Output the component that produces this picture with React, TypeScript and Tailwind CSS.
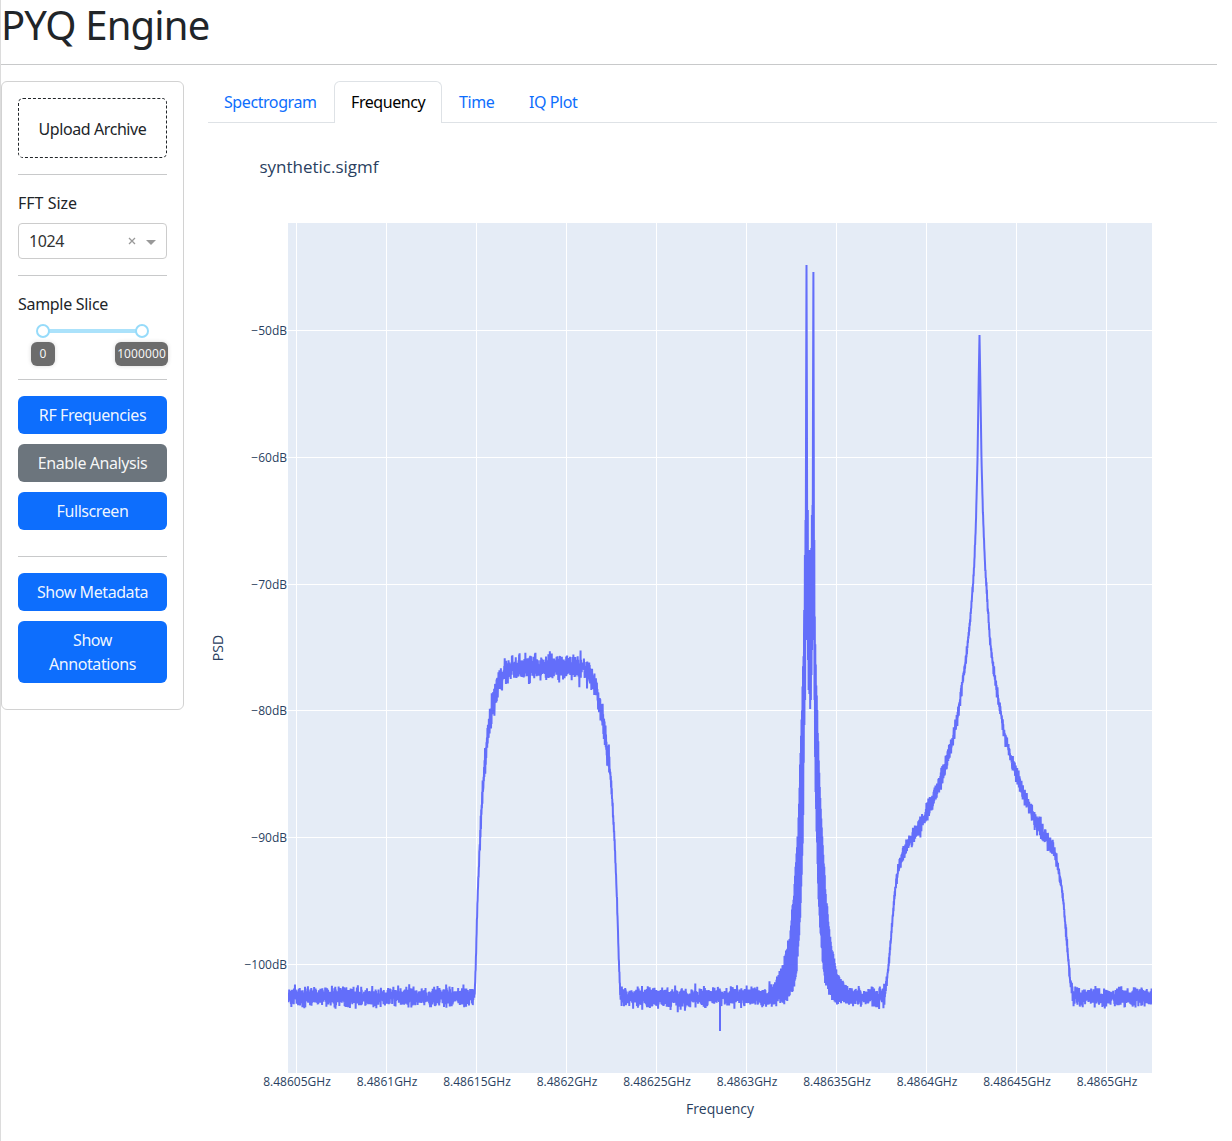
import React from "react";

type Point = [number, number];

function createRandom(seed: number) {
  let state = seed;
  return () => {
    state = (state * 1664525 + 1013904223) >>> 0;
    return state / 4294967296;
  };
}

const random = createRandom(20240);

function gauss() {
  let sum = 0;
  for (let i = 0; i < 6; i++) sum += random();
  return (sum - 3) * 1.41;
}

function interpolate(points: Point[], x: number) {
  if (x <= points[0][0]) return points[0][1];
  for (let i = 1; i < points.length; i++) {
    if (x <= points[i][0]) {
      const [x0, y0] = points[i - 1];
      const [x1, y1] = points[i];
      return y0 + ((y1 - y0) * (x - x0)) / (x1 - x0);
    }
  }
  return points[points.length - 1][1];
}

// [x, y, noise deviation]
const CENTRE: [number, number, number][] = [
  [288, 997, 3.3], [474, 997, 3.3], [474.8, 992, 1.5], [476, 958, 1.5], [477.5, 900, 2], [479.5, 850, 3],
  [482, 800, 4], [485, 765, 4.5], [488, 734, 5], [492, 711, 5], [496, 693, 5], [500, 681, 4.6], [505, 671, 4.2],
  [512, 667.5, 4.2], [582, 667.5, 4.2], [588, 671, 4.2], [593, 680, 4.2], [597, 691, 4.5], [601, 710, 5],
  [605, 735, 5], [609, 764, 4.5], [612, 795, 3], [614.5, 840, 2], [617, 900, 1.5], [619, 965, 1.5],
  [620.3, 995, 2.5], [621, 997, 3.3], [768, 997, 3.3],
];

const LEFT_TOP: Point[] = [
  [768, 991], [775, 985], [780, 974], [784, 963], [787, 950], [790, 935], [792, 915], [794, 890],
  [796, 860], [798, 833], [799, 803], [800, 765], [801, 735], [802, 710], [803, 670], [804, 640],
];
const LEFT_BOTTOM: Point[] = [
  [768, 1001], [785, 1001], [790, 995], [794, 985], [796, 975], [798, 950], [799.5, 930], [801, 900],
  [802, 870], [803, 835], [804, 740],
];
const RIGHT_TOP: Point[] = [
  [814.8, 620], [815.8, 670], [817, 706], [818, 735], [819, 765], [820.5, 800], [822, 835], [823.5, 860],
  [825, 885], [827, 907], [829, 927], [831, 944], [834, 960], [837, 973], [841, 983], [848, 989], [858, 993],
];
const RIGHT_BOTTOM: Point[] = [
  [814.8, 740], [815.8, 805], [817, 840], [818, 885], [819, 910], [821, 940], [823, 965], [825, 978],
  [828, 988], [833, 998], [845, 1001], [858, 1001],
];

const TWIN_TONES: Point[] = [
  [804.2, 610], [804.4, 725], [804.9, 555], [805.1, 700], [805.5, 520], [805.6, 640], [806.1, 400],
  [806.5, 265], [806.9, 400], [807.2, 560], [807.4, 640], [807.8, 510], [808, 660], [808.3, 555],
  [808.6, 690], [809, 555], [809.4, 694], [809.8, 550], [810.2, 709], [810.6, 552], [810.9, 700],
  [811.3, 548], [811.5, 675], [811.9, 515], [812.1, 650], [812.5, 505], [812.6, 620], [813, 400],
  [813.4, 272], [813.8, 460], [814, 640], [814.3, 540], [814.5, 700],
];

const TAIL: [number, number, number][] = [
  [858, 997, 3.3], [884, 997, 3.3], [885.5, 989, 2.5], [888, 970, 2], [890, 950, 2], [892, 925, 2],
  [894, 901, 2], [896, 883, 2], [899, 867, 2], [902, 857, 2.4], [905, 850, 3], [910, 841, 3.2],
  [917, 830, 3], [925, 817, 3], [932, 802, 3], [940, 782, 3], [945, 768, 3], [950, 749, 3],
  [954, 735, 2.4], [957, 718, 2.4], [960, 700, 2.4], [963, 680, 2.4], [966, 659, 2], [968, 641, 2],
  [971, 612, 2], [974, 570, 1.5], [976, 520, 1], [977.5, 460, 0], [978.7, 380, 0], [979.5, 335, 0],
  [980.3, 380, 0], [981.5, 460, 0], [983, 515, 1], [985, 565, 1.5], [988, 612, 2], [990, 640, 2],
  [993, 666, 2], [998, 697, 2.4], [1001, 715, 2.4], [1004, 733, 2.4], [1008, 748, 2.4], [1013, 764, 3],
  [1018, 779, 3], [1024, 795, 3], [1030, 809, 3.2], [1036, 820, 3.4], [1041, 829, 3.4], [1048, 841, 3.4],
  [1054, 850, 3], [1058, 867, 2], [1062, 889, 2], [1064, 908, 2], [1066, 932, 2], [1068, 955, 2],
  [1070, 979, 2], [1073, 995, 3], [1075, 997, 3.1], [1152, 997, 3.1],
];

const NOISE_GAIN = 1.65;

function noisy(samples: [number, number, number][], step: number): Point[] {
  const centre: Point[] = samples.map(([x, y]) => [x, y]);
  const spread: Point[] = samples.map(([x, , s]) => [x, s]);
  const out: Point[] = [];
  let sign = 1;
  for (let x = samples[0][0]; x <= samples[samples.length - 1][0]; x += step) {
    const swing = sign * (0.85 + 0.6 * gauss());
    out.push([x, interpolate(centre, x) + swing * NOISE_GAIN * interpolate(spread, x)]);
    sign = -sign;
  }
  return out;
}

function alternating(top: Point[], bottom: Point[], step: number): Point[] {
  const out: Point[] = [];
  let high = true;
  for (let x = top[0][0]; x <= top[top.length - 1][0]; x += step) {
    out.push([x, interpolate(high ? top : bottom, x) + gauss() * 3]);
    high = !high;
  }
  return out;
}

const trace: Point[] = [
  ...noisy(CENTRE, 0.24),
  ...alternating(LEFT_TOP, LEFT_BOTTOM, 0.25),
  ...TWIN_TONES,
  ...alternating(RIGHT_TOP, RIGHT_BOTTOM, 0.25),
  ...noisy(TAIL.slice(0, 30), 0.24),
  ...noisy(TAIL.slice(29), 0.24),
];

const tracePath = "M" + trace.map(([x, y]) => `${x.toFixed(2)},${y.toFixed(1)}`).join("L");

const X_TICKS = [
  "8.48605GHz", "8.4861GHz", "8.48615GHz", "8.4862GHz", "8.48625GHz",
  "8.4863GHz", "8.48635GHz", "8.4864GHz", "8.48645GHz", "8.4865GHz",
];
const Y_TICKS: [string, number][] = [
  ["−50dB", 330], ["−60dB", 457], ["−70dB", 584], ["−80dB", 710], ["−90dB", 837], ["−100dB", 964],
];

function SpectrumChart() {
  return (
    <svg
      width="1009"
      height="1018"
      viewBox="208 123 1009 1018"
      className="block tracking-normal"
      fill="#2a3f5f"
      fontFamily='"Open Sans", sans-serif'
      fontSize="12"
    >
      <defs>
        <clipPath id="plot-area">
          <rect x="288" y="223" width="864" height="850" />
        </clipPath>
      </defs>
      <text x="259.4" y="173" fontSize="17">synthetic.sigmf</text>
      <rect x="288" y="223" width="864" height="850" fill="#e5ecf6" />
      {X_TICKS.map((label, i) => (
        <g key={label}>
          <rect x={296 + i * 90} y="223" width="1" height="850" fill="#fff" />
          <text x={297 + i * 90} y="1086" textAnchor="middle">{label}</text>
        </g>
      ))}
      {Y_TICKS.map(([label, y]) => (
        <g key={label}>
          <rect x="288" y={y} width="864" height="1" fill="#fff" />
          <text x="287" y={y + 5} textAnchor="end">{label}</text>
        </g>
      ))}
      <g clipPath="url(#plot-area)" fill="none" stroke="#636efa" strokeWidth="2">
        <path d={tracePath} strokeLinejoin="bevel" />
        <path d="M720 997V1031" />
      </g>
      <text x="720" y="1114" fontSize="14" textAnchor="middle">Frequency</text>
      <text transform="translate(223 648) rotate(-90)" fontSize="14" textAnchor="middle">PSD</text>
    </svg>
  );
}

function Divider() {
  return <hr className="my-4 border-t border-[#c8c9ca]" />;
}

function Button({ children, muted = false }: { children: React.ReactNode; muted?: boolean }) {
  return (
    <button
      className={
        "mb-2.5 block w-full rounded-md px-3 py-[7px] text-center text-white/95 " +
        (muted ? "bg-[#6c757d]" : "bg-[#0d6efd]")
      }
    >
      {children}
    </button>
  );
}

function SliceSlider() {
  return (
    <div className="relative h-[47px] tracking-normal">
      <div className="absolute left-[25px] top-[13px] h-1 w-[99px] bg-[#abe2fb]" />
      <div className="absolute left-[18px] top-2 size-3.5 rounded-full border-2 border-[#96dbfa] bg-white" />
      <div className="absolute left-[117px] top-2 size-3.5 rounded-full border-2 border-[#96dbfa] bg-white" />
      <div className="absolute left-[13px] top-[26px] h-6 w-6 rounded-md bg-[#6c6c6c] text-center text-xs leading-6 text-white/95 shadow-[0_0_4px_#d9d9d9]">
        0
      </div>
      <div className="absolute left-[97px] top-[26px] h-6 w-[53px] rounded-md bg-[#6c6c6c] text-center text-xs leading-6 tracking-[0.1px] text-white/95 shadow-[0_0_4px_#d9d9d9]">
        1000000
      </div>
    </div>
  );
}

function Sidebar() {
  return (
    <aside className="h-[629px] w-[183px] shrink-0 rounded-md border border-[#d2d2d2] p-4">
      <div className="flex h-[60px] items-center justify-center rounded-[5px] border border-dashed border-[#212529] pt-0.5">
        Upload Archive
      </div>
      <Divider />
      <div className="tracking-normal">FFT Size</div>
      <div className="mt-2 flex h-9 items-center rounded border border-[#ccc] pl-2.5 pr-2.5 text-[#333]">
        <span className="flex-1">1024</span>
        <svg width="8" height="8" viewBox="0 0 8 8" className="mr-2.5" stroke="#999" strokeWidth="1.3">
          <path d="M1 1L7 7M7 1L1 7" />
        </svg>
        <svg width="10" height="5" viewBox="0 0 10 5" className="mt-0.5" fill="#999">
          <path d="M0 0H10L5 5Z" />
        </svg>
      </div>
      <Divider />
      <div className="tracking-[-0.3px]">Sample Slice</div>
      <SliceSlider />
      <Divider />
      <Button>RF Frequencies</Button>
      <Button muted>Enable Analysis</Button>
      <Button>Fullscreen</Button>
      <div className="pt-4">
        <hr className="mb-4 border-t border-[#c8c9ca]" />
      </div>
      <Button>Show Metadata</Button>
      <Button>Show Annotations</Button>
    </aside>
  );
}

function Tabs() {
  return (
    <nav className="flex h-[42px] border-b border-[#dee2e6] text-[#0d6efd]">
      <a className="w-[126px] py-[9px] pl-4">Spectrogram</a>
      <a className="h-[42px] w-[108px] rounded-t-md border border-b-0 border-[#dee2e6] bg-white px-4 py-2 text-black">
        Frequency
      </a>
      <a className="w-[70px] py-[9px] pl-[17px]">Time</a>
      <a className="py-[9px] pl-[17px]">IQ Plot</a>
    </nav>
  );
}

export default function App() {
  return (
    <div className="h-[1141px] border-l border-[#dcdcdc] bg-white font-['Noto_Sans',sans-serif] text-base leading-6 tracking-[-0.42px] text-[#212529]">
      <div className="w-[1216px]">
        <h1 className="h-16 pt-px text-[40px] leading-[48px] tracking-[-0.85px]">PYQ Engine</h1>
        <hr className="mb-4 border-t border-[#c8c9ca]" />
        <div className="flex gap-6">
          <Sidebar />
          <main className="min-w-0 flex-1">
            <Tabs />
            <SpectrumChart />
          </main>
        </div>
      </div>
    </div>
  );
}
